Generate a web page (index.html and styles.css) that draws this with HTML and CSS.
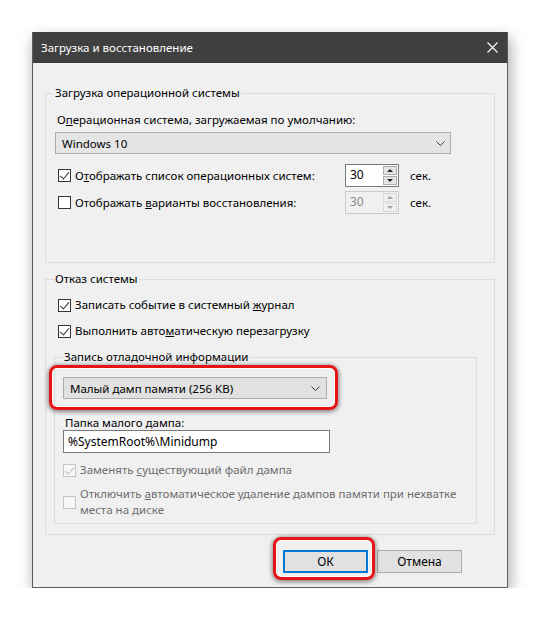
FILE: index.html
```html
<!DOCTYPE html>
<html lang="ru">
<head>
<meta charset="UTF-8">
<title>Загрузка и восстановление</title>
<link rel="stylesheet" href="styles.css">
</head>
<body>
<div class="stage">
  <div class="window">
    <div class="titlebar">
      <span class="title">Загрузка и восстановление</span>
      <svg class="close" width="11" height="11" viewBox="0 0 11 11"><path d="M0.5 0.5L10.5 10.5M10.5 0.5L0.5 10.5" stroke="#fff" stroke-width="1.1" fill="none"/></svg>
    </div>
    <div class="content">
      <fieldset class="group g-boot">
        <legend>Загрузка операционной системы</legend>
        <div class="label first">О<u>п</u>ерационная система, загружаемая по умолчанию:</div>
        <div class="select wide">
          <span>Windows 10</span>
          <svg width="9" height="5" viewBox="0 0 9 5"><polyline points="0.5,0.5 4.5,4.5 8.5,0.5" stroke="#333" fill="none"/></svg>
        </div>
        <div class="row spin-row r1">
          <label class="check-label"><span class="check on"></span><span>О<u>т</u>ображать список операционных систем:</span></label>
          <div class="spin">
            <span class="spin-val">30</span>
            <span class="spin-btns"><span class="up"></span><span class="down"></span></span>
          </div>
          <span class="unit">сек.</span>
        </div>
        <div class="row spin-row r2">
          <label class="check-label"><span class="check"></span><span>Отображать <u>в</u>арианты восстановления:</span></label>
          <div class="spin off">
            <span class="spin-val">30</span>
            <span class="spin-btns"><span class="up"></span><span class="down"></span></span>
          </div>
          <span class="unit">сек.</span>
        </div>
      </fieldset>

      <fieldset class="group g-fail">
        <legend>Отказ системы</legend>
        <label class="row check-label c1"><span class="check on"></span><span>Записать событие в системный <u>ж</u>урнал</span></label>
        <label class="row check-label c2"><span class="check on"></span><span>Выполнить авто<u>м</u>атическую перезагрузку</span></label>

        <fieldset class="group g-dump">
          <legend>Запись отладочной информации</legend>
          <div class="mark mark-dump">
            <div class="select dump">
              <span>Малый дамп памяти (256 KB)</span>
              <svg width="9" height="5" viewBox="0 0 9 5"><polyline points="0.5,0.5 4.5,4.5 8.5,0.5" stroke="#333" fill="none"/></svg>
            </div>
          </div>
          <div class="label small">Папка малого дампа:</div>
          <div class="textbox">%SystemRoot%\Minidump</div>
          <label class="row check-label dis d1"><span class="check on dis"></span><span>Заменять <u>с</u>уществующий файл дампа</span></label>
          <label class="row check-label dis d2"><span class="check dis"></span><span>Отключить <u>а</u>втоматическое удаление дампов памяти при нехватке<br>места на диске</span></label>
        </fieldset>
      </fieldset>

      <div class="buttons">
        <div class="mark mark-ok"><button class="btn ok">ОК</button></div>
        <button class="btn">Отмена</button>
      </div>
    </div>
  </div>
</div>
</body>
</html>
```

FILE: styles.css
```css
*{
    box-sizing:border-box;
}
body{
    margin:0;
    background:#fff;
    font-family:"Noto Sans","Open Sans",sans-serif;
    font-size:11.5px;
    color:#000;
}
.stage{
    padding:32px 0 0 32px;
}
.window{
    width:476px;
    background:#f0f0f0;
    border:1px solid #5c5c5c;
    border-top:none;
    box-shadow:2px 6px 14px rgba(0,0,0,0.35);
}
.titlebar{
    height:31px;
    background:#404040;
    display:flex;
    align-items:center;
    justify-content:space-between;
    padding:0 9px 0 8px;
}
.title{
    color:#fff;
    line-height:16px;
}
.close{
    display:block;
}
.content{
    padding:0 12px 14px 12px;
}

/* group boxes */
.group{
    margin:0;
    border:1px solid #dcdcdc;
    padding:0 0 0 9px;
    min-width:0;
}
.group legend{
    padding:0 1px;
    margin-left:-1px;
    line-height:16px;
}
.g-boot{
    margin-top:22px;
    padding-bottom:48px;
}
.g-fail{
    margin-top:8px;
    padding-top:10px;
    padding-bottom:10px;
}
.g-dump{
    margin:10px 17px 0 -1px;
    padding:0 0 5px 8px;
}
.g-dump legend{
    margin-left:0;
}

.label{
    line-height:16px;
    padding-left:2px;
}
.label.first{
    margin-top:11px;
}
.label.small{
    margin-top:17px;
    line-height:14px;
}

/* combo boxes */
.select{
    height:22px;
    background:#e5e5e5;
    border:1px solid #adadad;
    display:flex;
    align-items:center;
    justify-content:space-between;
    padding:0 5px 0 6px;
    margin-top:4px;
}
.select.wide{
    width:396px;
}
.select.dump{
    width:264px;
    margin-top:0;
    background:#e1e1e1;
    padding-right:6px;
}

/* rows with checkboxes */
.row{
    display:flex;
    align-items:center;
}
.check-label{
    display:flex;
    align-items:center;
    line-height:16px;
}
.check{
    width:13px;
    height:13px;
    flex:none;
    border:1px solid #333;
    background:#fff;
    margin:0 4px 0 3px;
    position:relative;
}
.check.on::after{
    content:"";
    position:absolute;
    left:3px;
    top:0;
    width:4px;
    height:8px;
    border:solid #333;
    border-width:0 1px 1px 0;
    transform:rotate(40deg);
}
.check.dis{
    border-color:#c5c5c5;
    background:#f7f7f7;
}
.check.dis.on::after{
    border-color:#c0c0c0;
}
.check-label.dis{
    color:#6d6d6d;
}

.spin-row .check-label{
    width:290px;
}
.r1{
    margin-top:10px;
}
.r2{
    margin-top:4px;
}
.spin{
    width:54px;
    height:23px;
    display:flex;
    border:1px solid #7a7a7a;
    background:#fff;
}
.spin-val{
    width:36px;
    padding-left:4px;
    line-height:20px;
    font-size:12px;
}
.spin-btns{
    display:flex;
    flex-direction:column;
    justify-content:space-between;
    padding:1px;
    width:16px;
}
.spin-btns span{
    flex:1;
    background:#e5e5e5;
    border:1px solid #adadad;
    position:relative;
}
.spin-btns .up{
    margin-bottom:1px;
}
.spin-btns span::after{
    content:"";
    position:absolute;
    left:3px;
    top:2px;
    border-left:3px solid transparent;
    border-right:3px solid transparent;
}
.spin-btns .up::after{
    border-bottom:3px solid #222;
}
.spin-btns .down::after{
    border-top:3px solid #222;
}
.spin.off{
    border-color:#cccccc;
    background:#f0f0f0;
    color:#8a8a8a;
}
.spin.off .spin-btns span{
    background:#f0f0f0;
    border-color:#d9d9d9;
}
.spin.off .up::after{
    border-bottom-color:#a0a0a0;
}
.spin.off .down::after{
    border-top-color:#a0a0a0;
}
.unit{
    margin-left:11px;
}

.c1{
    margin-top:0;
}
.c2{
    margin-top:10px;
}

.textbox{
    width:267px;
    height:23px;
    background:#fff;
    border:1px solid #7a7a7a;
    padding-left:4px;
    line-height:21px;
    font-size:12px;
}
.d1{
    margin-top:9px;
}
.d2{
    margin-top:8px;
}
.g-dump .check{
    margin-left:0;
}

/* red annotation rings */
.mark{
    position:relative;
}
.mark::after{
    content:"";
    position:absolute;
    border:3px solid #e51515;
    border-radius:8px;
    box-shadow:inset 0 0 0 1px rgba(255,255,255,0.85),0 1px 4px 1px rgba(0,0,0,0.45);
    pointer-events:none;
}
.mark-dump{
    margin-top:12px;
}
.mark-dump::after{
    left:-14px;
    right:calc(100% - 275px);
    top:-12px;
    bottom:-11px;
}
.mark-ok::after{
    left:-10px;
    right:-7px;
    top:-13px;
    bottom:-7px;
}

/* buttons */
.buttons{
    display:flex;
    justify-content:flex-end;
    gap:9px;
    margin:15px 33px 0 0;
}
.btn{
    width:85px;
    height:23px;
    font:inherit;
    font-size:12px;
    color:#000;
    background:#e1e1e1;
    border:1px solid #adadad;
    padding:0;
    display:block;
}
.btn.ok{
    border:2px solid #0078d7;
}
```
